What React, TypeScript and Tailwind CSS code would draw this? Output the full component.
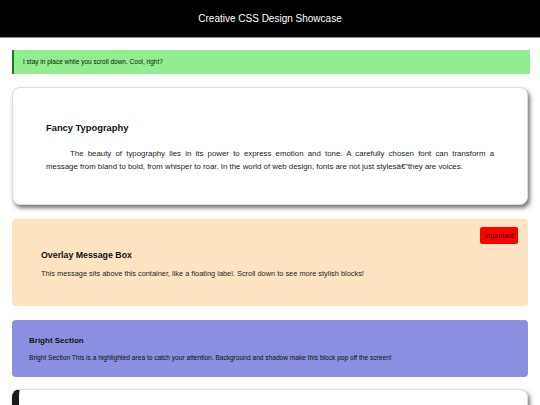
import React from "react";

export default function App() {
  return (
    <div className="min-h-[405px] bg-white font-['Liberation_Sans',Arial,sans-serif] text-[#111]">
      <header className="flex h-[38px] items-center justify-center border-b border-[#8a8a8a] bg-black">
        <h1 className="text-[10px] text-white">Creative CSS Design Showcase</h1>
      </header>

      <div className="flex flex-col px-[12px] pt-[12px]">
        <div className="mr-[-2px] flex h-[24px] items-center border-l-2 border-[#1f7a1f] bg-[#90ee90] pl-[9px]">
          <p className="text-[6.5px] text-[#111]">I stay in place while you scroll down. Cool, right?</p>
        </div>

        <section className="mt-[13px] h-[118px] rounded-[8px] border border-[#ddd] bg-white px-[33px] pt-[34px] shadow-[2px_3px_4px_rgba(0,0,0,0.55)]">
          <h3 className="text-[9.36px] font-bold leading-[12px]">Fancy Typography</h3>
          <p className="mt-[13px] text-[7.85px] leading-[13px] text-[#222]">
            <span className="block indent-[24px] text-justify [text-align-last:justify]">
              The beauty of typography lies in its power to express emotion and tone. A carefully chosen font can
              transform a
            </span>
            <span className="block">
              message from bland to bold, from whisper to roar. In the world of web design, fonts are not just
              stylesâ€{"\u201d"}they are voices.
            </span>
          </p>
        </section>

        <section className="relative mt-[14px] h-[87px] rounded-[4px] bg-[#ffe4c4] px-[29px] pt-[30px]">
          <span className="absolute right-[10px] top-[8px] rounded-[2px] bg-[#ff0000] px-[4px] py-[4px] text-[7px] leading-[9px] text-[#220000]">
            Important
          </span>
          <h3 className="text-[8.8px] font-bold leading-[12px]">Overlay Message Box</h3>
          <p className="mt-[8px] text-[7.4px] leading-[10px] text-[#222]">
            This message sits above this container, like a floating label. Scroll down to see more stylish blocks!
          </p>
        </section>

        <section className="mt-[14px] h-[57px] rounded-[4px] bg-[#8c8fe0] px-[17px] pt-[16px]">
          <h4 className="text-[8px] font-bold leading-[10px] text-[#111]">Bright Section</h4>
          <p className="mt-[7px] text-[6.6px] leading-[9px] text-[#111]">
            Bright Section This is a highlighted area to catch your attention. Background and shadow make this block
            pop off the screen!
          </p>
        </section>

        <section className="mt-[12px] h-[80px] rounded-[8px] border border-l-[7px] border-[#ddd] border-l-[#1a1a1a] bg-white shadow-[2px_3px_4px_rgba(0,0,0,0.55)]" />
      </div>
    </div>
  );
}
